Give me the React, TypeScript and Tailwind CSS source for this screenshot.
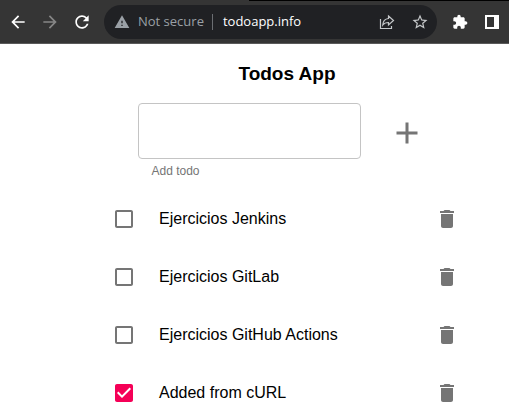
import { useState } from "react";

const initialTodos = [
  { id: 1, text: "Ejercicios Jenkins", done: false },
  { id: 2, text: "Ejercicios GitLab", done: false },
  { id: 3, text: "Ejercicios GitHub Actions", done: false },
  { id: 4, text: "Added from cURL", done: true },
];

function Icon({ d, className }: { d: string; className: string }) {
  return (
    <svg viewBox="0 0 24 24" fill="currentColor" aria-hidden="true" className={className}>
      <path d={d} />
    </svg>
  );
}

const paths = {
  back: "M20 11H7.83l5.59-5.59L12 4l-8 8 8 8 1.41-1.41L7.83 13H20v-2z",
  forward: "M12 4l-1.41 1.41L16.17 11H4v2h12.17l-5.58 5.59L12 20l8-8z",
  reload:
    "M17.65 6.35C16.2 4.9 14.21 4 12 4c-4.42 0-7.99 3.58-7.99 8s3.57 8 7.99 8c3.73 0 6.84-2.55 7.73-6h-2.08c-.82 2.33-3.04 4-5.65 4-3.31 0-6-2.69-6-6s2.69-6 6-6c1.66 0 3.14.69 4.22 1.78L13 11h7V4l-2.35 2.35z",
  warning: "M1 21h22L12 2 1 21zm12-3h-2v-2h2v2zm0-4h-2v-4h2v4z",
  star: "M22 9.24l-7.19-.62L12 2 9.19 8.63 2 9.24l5.46 4.73L5.82 21 12 17.27 18.18 21l-1.63-7.03L22 9.24zM12 15.4l-3.76 2.27 1-4.28-3.32-2.88 4.38-.38L12 6.1l1.71 4.04 4.38.38-3.32 2.88 1 4.28L12 15.4z",
  puzzle:
    "M20.5 11H19V7c0-1.1-.9-2-2-2h-4V3.5C13 2.12 11.88 1 10.5 1S8 2.12 8 3.5V5H4c-1.1 0-1.99.9-1.99 2v3.8H3.5c1.49 0 2.7 1.21 2.7 2.7s-1.21 2.7-2.7 2.7H2V20c0 1.1.9 2 2 2h3.8v-1.5c0-1.49 1.21-2.7 2.7-2.7 1.49 0 2.7 1.21 2.7 2.7V22H17c1.1 0 2-.9 2-2v-4h1.5c1.38 0 2.5-1.12 2.5-2.5S21.88 11 20.5 11z",
  plus: "M19 13h-6v6h-2v-6H5v-2h6V5h2v6h6v2z",
  trash: "M6 19c0 1.1.9 2 2 2h8c1.1 0 2-.9 2-2V7H6v12zM19 4h-3.5l-1-1h-5l-1 1H5v2h14V4z",
  boxEmpty:
    "M19 5v14H5V5h14m0-2H5c-1.1 0-2 .9-2 2v14c0 1.1.9 2 2 2h14c1.1 0 2-.9 2-2V5c0-1.1-.9-2-2-2z",
  boxChecked:
    "M19 3H5c-1.11 0-2 .9-2 2v14c0 1.1.89 2 2 2h14c1.11 0 2-.9 2-2V5c0-1.1-.89-2-2-2zm-9 14l-5-5 1.41-1.41L10 14.17l7.59-7.59L19 8l-9 9z",
};

function Toolbar() {
  return (
    <header className="border-b border-[#5a5a5a] bg-[#353535] font-['Open_Sans','Noto_Sans',sans-serif] text-white">
      {/* lower edge of the tab strip, to the right of the active tab */}
      <div className="ml-[49%] h-px bg-black" />
      <div className="flex h-[42px] items-center pr-[9px] pl-2">
        <nav className="flex shrink-0 items-center gap-3">
          <button aria-label="Back">
            <Icon d={paths.back} className="size-5" />
          </button>
          <button aria-label="Forward" className="text-[#868686]">
            <Icon d={paths.forward} className="size-5" />
          </button>
          <button aria-label="Reload">
            <Icon d={paths.reload} className="size-5" />
          </button>
        </nav>
        <div className="ml-3 flex h-[34px] min-w-0 flex-1 items-center rounded-full bg-[#202124] pr-2 pl-2.5 text-[13px]">
          <Icon d={paths.warning} className="size-4 shrink-0 text-[#9aa0a6]" />
          <span className="ml-2 whitespace-nowrap text-[#9aa0a6]">Not secure</span>
          <span className="mr-2.5 ml-2 h-4 w-px bg-[#6b6e72]" />
          <span className="flex-1 whitespace-nowrap">todoapp.info</span>
          <button aria-label="Share" className="text-[#c4c7c9]">
            <svg
              viewBox="0 0 16 16"
              fill="none"
              stroke="currentColor"
              strokeWidth="1.2"
              aria-hidden="true"
              className="size-4"
            >
              <path d="M1.500 5v9.500h11V12" />
              <path d="M9.500 2l5 4.500-5 4.500V8.500C7 8.500 5 9.300 3.800 11c.2-3.800 2.200-6.200 5.700-6.500z" />
            </svg>
          </button>
          <button aria-label="Bookmark" className="ml-4 text-[#c4c7c9]">
            <Icon d={paths.star} className="size-[18px]" />
          </button>
        </div>
        <div className="ml-[15px] flex shrink-0 items-center gap-4">
          <button aria-label="Extensions">
            <Icon d={paths.puzzle} className="size-4" />
          </button>
          <button aria-label="Side panel" className="p-px">
            <svg viewBox="0 0 14 14" aria-hidden="true" className="size-3.5">
              <path fill="currentColor" fillRule="evenodd" d="M0 0h14v14H0zM2 2v10h7V2z" />
            </svg>
          </button>
        </div>
      </div>
    </header>
  );
}

export default function App() {
  const [todos, setTodos] = useState(initialTodos);
  const [draft, setDraft] = useState("");

  const add = () => {
    if (!draft.trim()) return;
    setTodos([...todos, { id: Date.now(), text: draft, done: false }]);
    setDraft("");
  };

  return (
    <div className="min-h-screen bg-white font-['Liberation_Sans',Arial,sans-serif] text-black">
      <Toolbar />
      <main className="pt-[18px] pl-[65px]">
        <h1 className="text-center text-[19px] leading-6 font-bold">Todos App</h1>
        <form
          className="mt-[17px] flex items-start justify-center gap-4"
          onSubmit={(e) => {
            e.preventDefault();
            add();
          }}
        >
          <div className="w-[223px]">
            <input
              id="new-todo"
              value={draft}
              onChange={(e) => setDraft(e.target.value)}
              className="block h-14 w-full rounded border border-[#c4c4c4] px-3.5 text-base"
            />
            <label
              htmlFor="new-todo"
              className="mt-1 block px-3.5 text-xs leading-4 text-[#757575]"
            >
              Add todo
            </label>
          </div>
          <button aria-label="Add" className="p-3 text-[#757575]">
            <Icon d={paths.plus} className="size-9" />
          </button>
        </form>
        <ul className="mx-auto mt-[11px] max-w-[350px]">
          {todos.map((todo) => (
            <li key={todo.id} className="flex h-[58px] items-center pr-[3px]">
              <label className="flex flex-1 items-center gap-[23px] text-base">
                <span className="relative size-6">
                  <input
                    type="checkbox"
                    checked={todo.done}
                    onChange={() =>
                      setTodos(todos.map((t) => (t.id === todo.id ? { ...t, done: !t.done } : t)))
                    }
                    className="absolute inset-0 size-full opacity-0"
                  />
                  <Icon
                    d={todo.done ? paths.boxChecked : paths.boxEmpty}
                    className={todo.done ? "size-6 text-[#f50057]" : "size-6 text-[#757575]"}
                  />
                </span>
                {todo.text}
              </label>
              <button
                aria-label={`Delete ${todo.text}`}
                onClick={() => setTodos(todos.filter((t) => t.id !== todo.id))}
                className="text-[#757575]"
              >
                <Icon d={paths.trash} className="size-6" />
              </button>
            </li>
          ))}
        </ul>
      </main>
    </div>
  );
}
